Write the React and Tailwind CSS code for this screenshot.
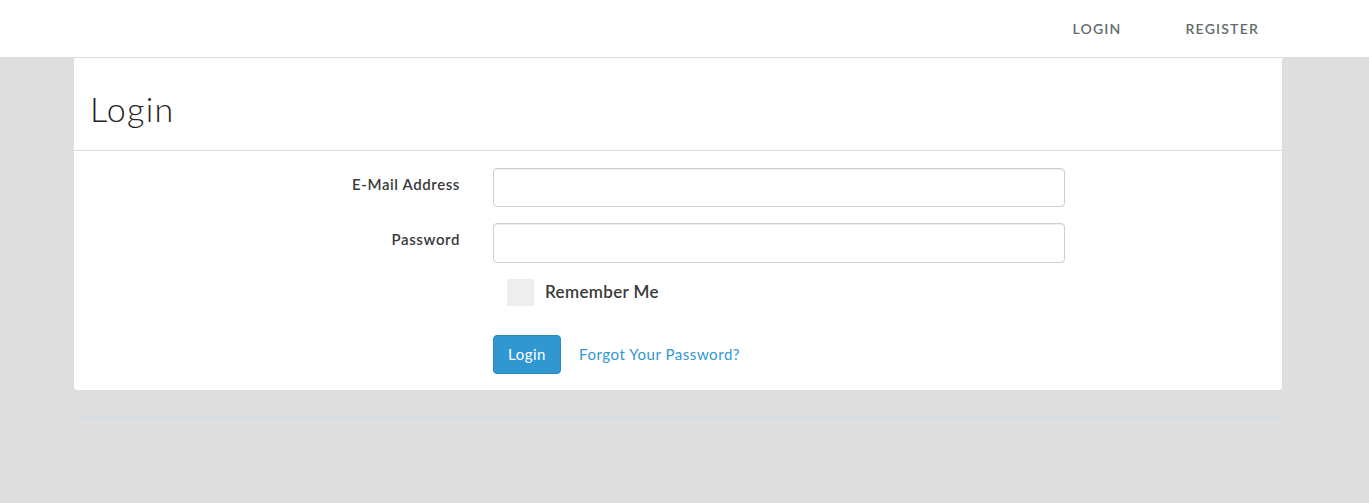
export default function App() {
  const font = { fontFamily: '"Lato", "Open Sans", sans-serif' };
  return (
    <div className="min-h-[503px] bg-[#dedede] text-[#333]" style={font}>
      <nav className="h-[58px] bg-white border-b border-[#d3e0e9] flex items-center justify-end pr-[110px]">
        <a className="text-[14px] font-semibold tracking-[1.2px] text-[#636b6f] mr-[64px]">LOGIN</a>
        <a className="text-[14px] font-semibold tracking-[1.2px] text-[#636b6f]">REGISTER</a>
      </nav>
      <div className="ml-[74px] w-[1208px]">
        <div className="bg-white rounded-b-[4px] border-b border-[#d3e0e9]">
          <div className="h-[93px] border-b border-[#d3e0e9] flex items-center pl-[16px] pt-[9px]">
            <h1 className="text-[34px] font-light tracking-[1.3px] text-[#222]">Login</h1>
          </div>
          <div className="pt-[17px] pb-[16px]">
            <div className="flex items-start mb-[16px]">
              <label className="w-[387px] text-right text-[15px] font-semibold tracking-[0.6px] text-[#3a3a3a] pr-[1px] pt-[5px]">E-Mail Address</label>
              <input className="ml-[32px] w-[572px] h-[39px] border border-[#ccd0d2] rounded-[4px] shadow-[inset_0_1px_1px_rgba(0,0,0,0.075)]" />
            </div>
            <div className="flex items-start mb-[16px]">
              <label className="w-[387px] text-right text-[15px] font-semibold tracking-[0.6px] text-[#3a3a3a] pr-[1px] pt-[5px]">Password</label>
              <input type="password" className="ml-[32px] w-[572px] h-[40px] border border-[#ccd0d2] rounded-[4px] shadow-[inset_0_1px_1px_rgba(0,0,0,0.075)]" />
            </div>
            <div className="flex items-center ml-[433px] h-[27px]">
              <span className="w-[27px] h-[27px] bg-[#eeeeee]"></span>
              <span className="ml-[11px] text-[17px] font-semibold tracking-[0.35px] text-[#3a3a3a] -mt-[2px]">Remember Me</span>
            </div>
            <div className="flex items-center ml-[419px] mt-[29px]">
              <button className="w-[68px] h-[39px] bg-[#3097d1] border border-[#2a88bd] rounded-[4px] text-white text-[15px] tracking-[0.5px] pb-[1px]">Login</button>
              <a className="ml-[18px] text-[#3097d1] text-[15px] tracking-[0.55px] -mt-[1px]">Forgot Your Password?</a>
            </div>
          </div>
        </div>
        <div className="mt-[26px] border-t border-[#c9dcea]"></div>
      </div>
    </div>
  );
}
